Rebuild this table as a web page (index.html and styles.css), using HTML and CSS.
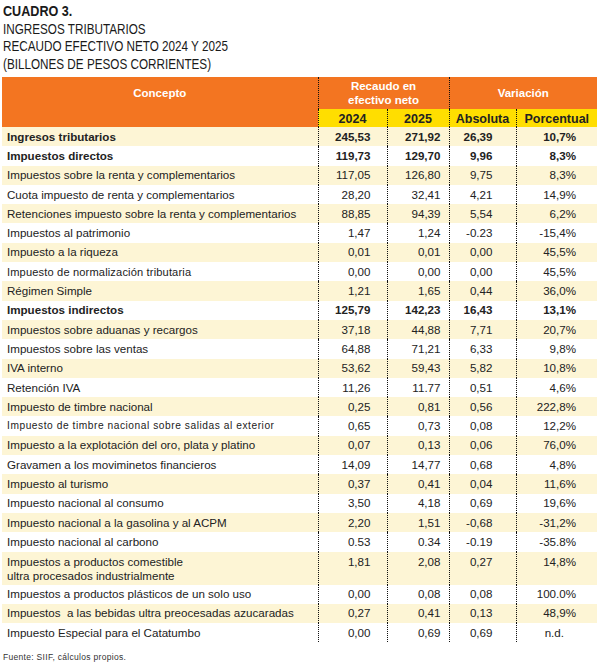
FILE: index.html
```html
<!DOCTYPE html>
<html lang="es">
<head>
    <meta charset="UTF-8">
    <title>Cuadro 3. Ingresos tributarios</title>
    <link rel="stylesheet" href="styles.css">
</head>
<body>
    <!-- Titulo -->
    <div class="titulo">
        <div class="titulo-num">CUADRO 3.</div>
        <div>INGRESOS TRIBUTARIOS</div>
        <div>RECAUDO EFECTIVO NETO 2024 Y 2025</div>
        <div>(BILLONES DE PESOS CORRIENTES)</div>
    </div>

    <!-- Tabla -->
    <table class="cuadro">
        <colgroup>
            <col class="c-concepto">
            <col class="c-2024">
            <col class="c-2025">
            <col class="c-abs">
            <col class="c-porc">
        </colgroup>
        <thead>
            <tr class="head-1">
                <th rowspan="2" class="th-concepto"><span>Concepto</span></th>
                <th colspan="2" class="dot">Recaudo en<br>efectivo neto</th>
                <th colspan="2" class="dot">Variación</th>
            </tr>
            <tr class="head-2">
                <th class="dot"><div class="cut">2024</div></th>
                <th class="dot"><div class="cut">2025</div></th>
                <th class="dot"><div class="cut">Absoluta</div></th>
                <th class="dot"><div class="cut">Porcentual</div></th>
            </tr>
        </thead>
        <tbody>
            <tr class="alt bold"><td>Ingresos tributarios</td><td>245,53</td><td>271,92</td><td>26,39</td><td>10,7%</td></tr>
            <tr class="bold"><td>Impuestos directos</td><td>119,73</td><td>129,70</td><td>9,96</td><td>8,3%</td></tr>
            <tr class="alt"><td>Impuestos sobre la renta y complementarios</td><td>117,05</td><td>126,80</td><td>9,75</td><td>8,3%</td></tr>
            <tr><td>Cuota impuesto de renta y complementarios</td><td>28,20</td><td>32,41</td><td>4,21</td><td>14,9%</td></tr>
            <tr class="alt"><td>Retenciones impuesto sobre la renta y complementarios</td><td>88,85</td><td>94,39</td><td>5,54</td><td>6,2%</td></tr>
            <tr><td>Impuestos al patrimonio</td><td>1,47</td><td>1,24</td><td>-0.23</td><td>-15,4%</td></tr>
            <tr class="alt"><td>Impuesto a la riqueza</td><td>0,01</td><td>0,01</td><td>0,00</td><td>45,5%</td></tr>
            <tr><td class="small">Impuesto de normalización tributaria</td><td>0,00</td><td>0,00</td><td>0,00</td><td>45,5%</td></tr>
            <tr class="alt"><td>Régimen Simple</td><td>1,21</td><td>1,65</td><td>0,44</td><td>36,0%</td></tr>
            <tr class="bold"><td>Impuestos indirectos</td><td>125,79</td><td>142,23</td><td>16,43</td><td>13,1%</td></tr>
            <tr class="alt"><td>Impuestos sobre aduanas y recargos</td><td>37,18</td><td>44,88</td><td>7,71</td><td>20,7%</td></tr>
            <tr><td>Impuestos sobre las ventas</td><td>64,88</td><td>71,21</td><td>6,33</td><td>9,8%</td></tr>
            <tr class="alt"><td>IVA interno</td><td>53,62</td><td>59,43</td><td>5,82</td><td>10,8%</td></tr>
            <tr><td>Retención IVA</td><td>11,26</td><td>11.77</td><td>0,51</td><td>4,6%</td></tr>
            <tr class="alt"><td>Impuesto de timbre nacional</td><td>0,25</td><td>0,81</td><td>0,56</td><td>222,8%</td></tr>
            <tr><td class="tiny">Impuesto de timbre nacional sobre salidas al exterior</td><td>0,65</td><td>0,73</td><td>0,08</td><td>12,2%</td></tr>
            <tr class="alt"><td>Impuesto a la explotación del oro, plata y platino</td><td>0,07</td><td>0,13</td><td>0,06</td><td>76,0%</td></tr>
            <tr><td>Gravamen a los moviminetos financieros</td><td>14,09</td><td>14,77</td><td>0,68</td><td>4,8%</td></tr>
            <tr class="alt"><td>Impuesto al turismo</td><td>0,37</td><td>0,41</td><td>0,04</td><td>11,6%</td></tr>
            <tr><td>Impuesto nacional al consumo</td><td>3,50</td><td>4,18</td><td>0,69</td><td>19,6%</td></tr>
            <tr class="alt"><td>Impuesto nacional a la gasolina y al ACPM</td><td>2,20</td><td>1,51</td><td>-0,68</td><td>-31,2%</td></tr>
            <tr><td>Impuesto nacional al carbono</td><td>0.53</td><td>0.34</td><td>-0.19</td><td>-35.8%</td></tr>
            <tr class="alt double"><td>Impuestos a productos comestible<br>ultra procesados industrialmente</td><td>1,81</td><td>2,08</td><td>0,27</td><td>14,8%</td></tr>
            <tr><td>Impuestos a productos plásticos de un solo uso</td><td>0,00</td><td>0,08</td><td>0,08</td><td>100.0%</td></tr>
            <tr class="alt"><td>Impuestos &nbsp;a las bebidas ultra preocesadas azucaradas</td><td>0,27</td><td>0,41</td><td>0,13</td><td>48,9%</td></tr>
            <tr><td>Impuesto Especial para el Catatumbo</td><td>0,00</td><td>0,69</td><td>0,69</td><td class="nd">n.d.</td></tr>
        </tbody>
    </table>

    <div class="fuente">Fuente: SIIF, cálculos propios.</div>
</body>
</html>
```

FILE: styles.css
```css
* {
    margin: 0;
    padding: 0;
    box-sizing: border-box;
}

body {
    background: #fff;
    color: #222;
    font-family: "Liberation Sans", Arial, sans-serif;
    width: 601px;
}

/* Titulo */
.titulo {
    padding: 2px 0 0 3px;
    font-size: 15px;
    line-height: 17.5px;
    color: #1a1a1a;
}

.titulo div {
    transform: scaleX(0.78);
    transform-origin: left center;
    white-space: nowrap;
}

.titulo .titulo-num {
    font-weight: bold;
    transform: scaleX(0.84);
}

/* Tabla */
.cuadro {
    margin: 5px 0 0 2px;
    width: 595px;
    border-collapse: collapse;
    table-layout: fixed;
    font-size: 11.6px;
}

.c-concepto { width: 316px; }
.c-2024 { width: 69px; }
.c-2025 { width: 62px; }
.c-abs { width: 67px; }
.c-porc { width: 81px; }

.cuadro th {
    font-weight: bold;
    text-align: center;
    padding: 0;
}

.cuadro .dot {
    border-left: 1px dotted #111;
}

.head-1 th {
    background: #f37521;
    color: #fff;
    height: 32px;
    font-size: 11.5px;
    line-height: 14px;
    vertical-align: middle;
}

.head-1 .th-concepto {
    vertical-align: top;
    padding-top: 9px;
}

.head-2 th {
    background: #ffde00;
    color: #222;
    height: 18px;
    font-size: 12.5px;
    vertical-align: top;
    white-space: nowrap;
}

.head-2 .cut {
    height: 18px;
    padding-top: 2px;
    line-height: 16px;
}

.cuadro td {
    height: 19.3px;
    padding: 0 8px 0 5px;
    white-space: nowrap;
    text-align: right;
    vertical-align: middle;
    border-left: 1px dotted #111;
    line-height: 14px;
}

.cuadro td:first-child {
    text-align: left;
    border-left: none;
    padding-left: 5px;
}

.cuadro td:nth-child(2) { padding-right: 16px; }
.cuadro td:nth-child(3) { padding-right: 8px; }
.cuadro td:nth-child(4) { padding-right: 23px; }
.cuadro td:nth-child(5) { padding-right: 21px; }

.cuadro td.nd {
    padding-right: 33px;
}

.cuadro tr.alt td {
    background: #fdf5d5;
}

.cuadro tr.bold td {
    font-weight: bold;
}

.cuadro tr.double td {
    height: 33px;
    vertical-align: top;
    padding-top: 3px;
}

.cuadro td.small {
    font-size: 11.1px;
    letter-spacing: 0.15px;
}

.cuadro td.tiny {
    font-size: 10.2px;
    letter-spacing: 0.55px;
}

/* Fuente */
.fuente {
    margin: 10px 0 0 3px;
    font-size: 8.5px;
    letter-spacing: 0.3px;
    color: #333;
}
```
